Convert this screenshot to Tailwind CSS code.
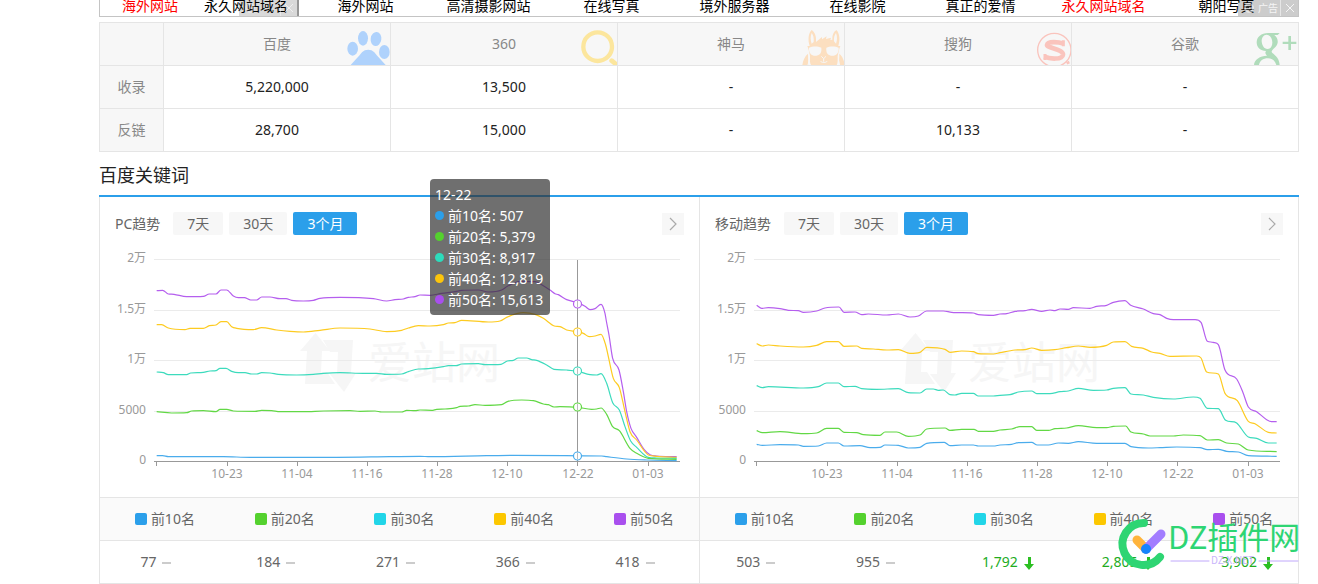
<!DOCTYPE html>
<html lang="zh-CN">
<head>
<meta charset="utf-8">
<title>百度关键词</title>
<script src="https://cdn.jsdelivr.net/npm/@tailwindcss/browser@4"></script>
</head>
<body class="bg-white text-sm text-[#666] font-['Noto_Sans','Noto_Sans_CJK_SC',sans-serif]">
<main class="relative ml-[99px] mr-[19px]">

  <!-- text link ads -->
  <nav class="relative flex h-[17px] border-x border-b border-[#c4c4c4] pl-[2px] pr-[10px] leading-[12px] text-center whitespace-nowrap text-black overflow-hidden">
    <a href="#" class="w-24 text-[#f00]">海外网站</a>
    <a href="#" class="w-24 mr-[10px]">永久网站域名</a>
    <a href="#" class="flex-1">海外网站</a>
    <a href="#" class="flex-1">高清摄影网站</a>
    <a href="#" class="flex-1">在线写真</a>
    <a href="#" class="flex-1">境外服务器</a>
    <a href="#" class="flex-1">在线影院</a>
    <a href="#" class="flex-1">真正的爱情</a>
    <a href="#" class="flex-1 text-[#f00]">永久网站域名</a>
    <a href="#" class="flex-1">朝阳写真</a>
    <div class="absolute left-[139px] bottom-0 flex h-4 w-[60px] items-center border-r-2 border-black/30 bg-black/15 text-white/60">
      <svg class="ml-[6px] size-[10px] shrink-0 opacity-50" viewBox="0 0 10 10" fill="none" stroke="currentColor" stroke-width="2"><circle cx="5" cy="5" r="4"/><path d="M5 5h3"/></svg>
      <button aria-label="关闭左侧广告" class="ml-auto flex h-full w-[17px] items-center justify-center border-l border-white/40"><svg class="size-2" viewBox="0 0 8 8" stroke="currentColor"><path d="M0 0l8 8M8 0l-8 8"/></svg></button>
    </div>
    <div class="absolute right-0 bottom-0 flex h-4 w-[60px] items-center bg-black/20 text-[10px] leading-4 text-white/80">
      <svg class="ml-[6px] size-[10px] shrink-0 opacity-60" viewBox="0 0 10 10" fill="none" stroke="currentColor" stroke-width="2"><circle cx="5" cy="5" r="4"/><path d="M5 5h3"/></svg>
      <span class="ml-[2px] w-[24px]">广告</span>
      <button aria-label="关闭广告" class="flex h-full flex-1 items-center justify-center border-l border-white/50"><svg class="size-2" viewBox="0 0 8 8" stroke="currentColor"><path d="M0 0l8 8M8 0l-8 8"/></svg></button>
    </div>
  </nav>

  <!-- search engine index table -->
  <table class="mt-[5px] w-full table-fixed border-collapse text-center text-[#222] [&_td]:h-[43px] [&_th]:h-[43px] [&_td]:border [&_th]:border [&_td]:border-[#e5e5e5] [&_th]:border-[#e5e5e5] [&_th]:bg-[#f7f7f7] [&_th]:font-normal [&_th]:text-[#888] [&_th]:relative [&_th]:p-0 [&_td]:p-0">
    <colgroup><col class="w-16"><col><col><col><col><col></colgroup>
    <thead>
      <tr>
        <th></th>
        <th scope="col">百度
          <svg class="absolute right-0 bottom-0 h-[35px] w-[43px]" viewBox="770 90 129 105" fill="#afd2fc"><ellipse cx="787" cy="146" rx="16" ry="21"/><ellipse cx="818" cy="115" rx="15" ry="22"/><ellipse cx="857" cy="117" rx="16" ry="21" transform="rotate(8 857 117)"/><ellipse cx="882" cy="156" rx="16" ry="21"/><path d="M781 195c12-14 24-24 34-38 10-10 27-10 37 0 10 14 22 24 34 38z"/></svg>
        </th>
        <th scope="col">360
          <svg class="absolute right-0 bottom-0 h-9 w-[37px]" viewBox="240 87 111 108" fill="none" stroke="#fce69d"><circle cx="293" cy="140" r="43" stroke-width="13"/><path d="M335 182l18 15" stroke-width="14" stroke-linecap="round"/></svg>
        </th>
        <th scope="col">神马
          <svg class="absolute right-0 bottom-0 h-9 w-[42px]" viewBox="905 87 126 108" fill="#fcdfc0"><path fill-rule="evenodd" d="M928 138c-6-20-4-38 6-48 11 7 14 21 13 36l18-15v7l14-9-2 8 15-4-2 7 6-1c-1-13 3-23 12-29 10 10 12 28 6 48h6l-3 8c-2 8-4 16-5 22 0 12 1 20-3 27h-77c-4-7-3-15-3-27-1-6-3-14-5-22l-3-8zM934 99c-4 10-4 22 0 32l6-5c1-11-1-21-6-27zM1007 99c-5 7-7 15-6 25l6 7c4-10 4-22 0-32z"/><path d="M906 195c2-15 8-27 17-34l1 34zM1033 195c-2-15-7-27-16-34l-1 34z"/><path fill="#f7f7f7" d="M926 143c10-5 27-5 37 0 2 18-7 24-18 24-12 0-20-8-19-24zM978 143c10-5 27-5 37 0 1 16-7 24-19 24-11 0-20-6-18-24z"/><path fill="none" stroke="#f7f7f7" stroke-width="3" d="M963 169l7 7 7-7M970 176v9M960 183c4 6 17 6 21 0M926 168q3 10-3 27M1015 168q-3 10 3 27"/></svg>
        </th>
        <th scope="col">搜狗
          <svg class="absolute right-0 bottom-0 h-[34px] w-[35px]" viewBox="408 93 105 102" fill="none" stroke="#fac4bd"><circle cx="463" cy="150" r="50" stroke-width="4"/><path stroke-width="14" d="M491 131c-14-5-48-9-50 4-1 9 49 12 48 29-2 16-40 13-56 6"/><path stroke-width="9" d="M490 121v18M435 162v18"/><path stroke-width="8" d="M500 190l8-4"/></svg>
        </th>
        <th scope="col">谷歌
          <svg class="absolute right-0 bottom-0 h-[34px] w-[46px]" viewBox="1057 93 138 102" fill="#b0dcbb"><path fill-rule="evenodd" d="M1105 99h35l-6 6h-10c8 7 11 14 10 23-2 14-19 20-18 28 4 7 23 14 24 39h-10c-4-14-13-20-25-20-15 0-25 8-27 20h-15c1-17 18-27 39-28-6-6-6-9-3-14-17 0-28-11-28-26 0-16 14-28 34-28zM1101 104c-10 0-15 9-15 20 1 13 8 23 17 23 10 0 15-8 15-20-1-13-7-23-17-23z"/><path d="M1149 125h41v7h-41zM1166 108h8v42h-8z"/></svg>
        </th>
      </tr>
    </thead>
    <tbody>
      <tr><th scope="row">收录</th><td>5,220,000</td><td>13,500</td><td>-</td><td>-</td><td>-</td></tr>
      <tr><th scope="row">反链</th><td>28,700</td><td>15,000</td><td>-</td><td>10,133</td><td>-</td></tr>
    </tbody>
  </table>

  <h2 class="flex h-[43px] items-center pt-[2px] text-lg text-[#222]">百度关键词</h2>

  <div class="relative grid grid-cols-2 border-t-2 border-[#2b9fea]">
    <!-- PC -->
    <section class="relative border-l border-[#e5e5e5]">
      <header class="flex items-center px-[15px] pt-[15px]">
        <h3 class="mr-[13px]">PC趋势</h3>
        <div class="flex gap-[6px] leading-[23px]">
          <button class="rounded-xs bg-[#f7f7f7] px-[14px]">7天</button>
          <button class="rounded-xs bg-[#f7f7f7] px-[14px]">30天</button>
          <button class="rounded-xs bg-[#2b9fea] px-[14px] text-white">3个月</button>
        </div>
        <button aria-label="PC趋势详情" class="ml-auto flex size-[22px] items-center justify-center bg-[#f7f7f7]"><svg class="h-[14px] w-2" viewBox="0 0 8 14" fill="none" stroke="#aaa" stroke-width="1.2"><path d="M1 1l6 6-6 6"/></svg></button>
      </header>
      <svg id="pc" class="block h-[262px] w-full text-xs" viewBox="100 235 590 262" preserveAspectRatio="xMinYMin meet" role="img" aria-label="PC趋势图"></svg>
      <table class="w-full table-fixed border-collapse text-center">
        <thead class="border-y border-[#e5e5e5] bg-[#fafafa]">
          <tr class="h-[43px] [&_th]:p-0 [&_th]:pl-[10px] [&_th]:font-normal">
            <th><span class="inline-flex items-center gap-1"><i class="size-3 rounded-xs bg-[#2b9fea]"></i>前10名</span></th>
            <th><span class="inline-flex items-center gap-1"><i class="size-3 rounded-xs bg-[#54d12e]"></i>前20名</span></th>
            <th><span class="inline-flex items-center gap-1"><i class="size-3 rounded-xs bg-[#21d5e8]"></i>前30名</span></th>
            <th><span class="inline-flex items-center gap-1"><i class="size-3 rounded-xs bg-[#fcc700]"></i>前40名</span></th>
            <th><span class="inline-flex items-center gap-1"><i class="size-3 rounded-xs bg-[#a94fee]"></i>前50名</span></th>
          </tr>
        </thead>
        <tbody class="border-b border-[#e5e5e5]">
          <tr class="h-[43px] [&_td]:p-0 [&_td]:pr-2 [&_i]:ml-[6px] [&_i]:inline-block [&_i]:h-[2px] [&_i]:w-[9px] [&_i]:bg-[#ccc] [&_i]:align-middle">
            <td>77<i></i></td><td>184<i></i></td><td>271<i></i></td><td>366<i></i></td><td>418<i></i></td>
          </tr>
        </tbody>
      </table>

      <!-- chart tooltip -->
      <div role="tooltip" class="absolute left-[330px] -top-[18px] w-[120px] rounded bg-[#323232]/70 p-[5px] leading-[21px] whitespace-nowrap text-white [&_p]:flex [&_p]:items-center [&_p]:gap-1 [&_i]:size-[9px] [&_i]:rounded-full">
        <div>12-22</div>
        <p><i class="bg-[#2b9fea]"></i>前10名: 507</p>
        <p><i class="bg-[#54d12e]"></i>前20名: 5,379</p>
        <p><i class="bg-[#2ddbbc]"></i>前30名: 8,917</p>
        <p><i class="bg-[#fcc50c]"></i>前40名: 12,819</p>
        <p><i class="bg-[#a94fee]"></i>前50名: 15,613</p>
      </div>
    </section>

    <!-- mobile -->
    <section class="border-x border-[#e5e5e5]">
      <header class="flex items-center px-[15px] pt-[15px]">
        <h3 class="mr-[13px]">移动趋势</h3>
        <div class="flex gap-[6px] leading-[23px]">
          <button class="rounded-xs bg-[#f7f7f7] px-[14px]">7天</button>
          <button class="rounded-xs bg-[#f7f7f7] px-[14px]">30天</button>
          <button class="rounded-xs bg-[#2b9fea] px-[14px] text-white">3个月</button>
        </div>
        <button aria-label="移动趋势详情" class="ml-auto flex size-[22px] items-center justify-center bg-[#f7f7f7]"><svg class="h-[14px] w-2" viewBox="0 0 8 14" fill="none" stroke="#aaa" stroke-width="1.2"><path d="M1 1l6 6-6 6"/></svg></button>
      </header>
      <svg id="mobile" class="block h-[262px] w-full text-xs" viewBox="100 235 590 262" preserveAspectRatio="xMinYMin meet" role="img" aria-label="移动趋势图"></svg>
      <table class="w-full table-fixed border-collapse text-center">
        <thead class="border-y border-[#e5e5e5] bg-[#fafafa]">
          <tr class="h-[43px] [&_th]:p-0 [&_th]:pl-[10px] [&_th]:font-normal">
            <th><span class="inline-flex items-center gap-1"><i class="size-3 rounded-xs bg-[#2b9fea]"></i>前10名</span></th>
            <th><span class="inline-flex items-center gap-1"><i class="size-3 rounded-xs bg-[#54d12e]"></i>前20名</span></th>
            <th><span class="inline-flex items-center gap-1"><i class="size-3 rounded-xs bg-[#21d5e8]"></i>前30名</span></th>
            <th><span class="inline-flex items-center gap-1"><i class="size-3 rounded-xs bg-[#fcc700]"></i>前40名</span></th>
            <th><span class="inline-flex items-center gap-1"><i class="size-3 rounded-xs bg-[#a94fee]"></i>前50名</span></th>
          </tr>
        </thead>
        <tbody class="border-b border-[#e5e5e5]">
          <tr class="h-[43px] [&_td]:p-0 [&_i]:ml-[6px] [&_i]:inline-block [&_i]:h-[2px] [&_i]:w-[9px] [&_i]:bg-[#ccc] [&_i]:align-middle [&_svg]:-mr-4 [&_svg]:ml-[6px] [&_svg]:inline-block [&_svg]:h-[13px] [&_svg]:w-[10px] [&_svg]:fill-[#2cbf22]">
            <td class="pr-2!">503<i></i></td><td class="pr-2!">955<i></i></td>
            <td class="pl-[2px]! text-[#22ac1e]">1,792<svg viewBox="0 0 10 13"><path d="M4 0h3v7h3l-5 6-5-6h4z"/></svg></td>
            <td class="pl-[2px]! text-[#22ac1e]">2,805<svg viewBox="0 0 10 13"><path d="M4 0h3v7h3l-5 6-5-6h4z"/></svg></td>
            <td class="pl-[2px]! text-[#22ac1e]">3,902<svg viewBox="0 0 10 13"><path d="M4 0h3v7h3l-5 6-5-6h4z"/></svg></td>
          </tr>
        </tbody>
      </table>
    </section>

    <!-- site watermark -->
    <svg class="pointer-events-none absolute right-0 bottom-[14px] h-[54px] w-[183px] overflow-visible font-['Noto_Sans_CJK_SC',sans-serif]" viewBox="0 0 183 54" fill="none" stroke-linecap="round" aria-label="DZ插件网">
      <path d="M28 7A21 21 0 1 0 44 41" stroke="#2ed573" stroke-width="8"/>
      <path d="M21 24l9 9" stroke="#ffb43c" stroke-width="9"/>
      <path d="M45 18L30 33" stroke="#a27dff" stroke-width="9"/>
      <circle cx="30" cy="33" r="5" fill="#1684fc"/>
      <text x="52" y="33" font-size="31" fill="#2ed573">DZ插件网</text>
      <path d="M55 45h38M143 45h39" stroke="#c0a8fb"/>
      <text x="95" y="48" font-size="10" fill="#c9b5fb">DZ-X.NET</text>
    </svg>
  </div>
</main>

<script>
// Each series is a list of [originX, originY, "x,y ..."] pieces, with x,y in thirds of a chart unit.
const charts = {
  pc: [
    ['#b55fee', [[90,160,'200,392 218,391 235,402 252,403 290,410 340,409 358,402 378,402 393,390 410,390 430,408 445,413 463,413 482,420 500,420 515,411 540,411 570,416 588,416 605,421 640,423 670,421 690,415 750,412 850,416 890,423 915,419 940,417 955,412 975,410 990,405'],
      [420,165,'30,391 65,385 105,380 125,376 175,375 205,381 245,375 262,364 285,353 300,349 345,350 370,362 390,375 405,386 415,389 440,404 473,413 495,424 510,434 525,431 543,418 555,445 559,468 567,510 578,580 597,615 610,680 620,740 633,790 650,817 672,853 690,869 710,873 770,875']]],
    ['#fdcb21', [[90,160,'200,494 215,494 235,504 285,509 300,505 340,505 358,497 378,495 393,485 410,485 425,500 440,505 490,509 515,503 560,510 600,514 640,516 690,511 750,504 840,507 890,515 935,511 955,504 985,497'],
      [420,165,'30,483 70,479 85,474 105,473 125,466 205,471 240,468 260,457 290,446 310,443 345,448 370,460 403,483 420,485 440,495 473,500 490,505 508,515 525,513 543,508 557,540 565,575 580,640 598,668 615,740 630,800 650,825 685,870 710,874 770,877']]],
    ['#3ddbbd', [[90,330,'200,126 220,128 235,134 290,134 302,129 340,127 360,123 378,122 390,115 408,115 425,124 445,128 465,128 485,132 500,132 515,128 540,129 565,133 620,135 670,133 700,130 750,128 820,130 860,130 890,133 935,132 955,125 985,117'],
      [420,320,'0,147 25,146 70,140 85,137 108,137 125,132 175,131 195,134 243,133 262,123 280,121 295,114 320,114 335,119 350,121 380,135 402,148 440,150 473,154 510,164 530,165 543,161 560,190 578,248 598,270 615,320 632,363 650,382 685,412 710,414 770,415']]],
    ['#62d845', [[90,330,'200,245 245,249 290,248 305,243 340,242 378,245 390,238 410,238 430,243 495,244 515,241 545,242 570,245 640,245 700,243 780,242 810,244 855,243 875,246 935,246 950,241 975,242'],
      [420,320,'0,270 35,271 50,268 75,267 110,263 120,259 145,258 165,254 195,256 245,254 262,245 305,240 340,242 370,252 385,254 402,261 420,260 473,262 515,268 530,267 543,264 560,283 578,320 598,332 630,385 650,400 685,415 770,418']]],
    ['#4aacec', [[90,330,'200,377 218,377 235,380 400,380 480,382 620,382 740,382 900,380'],
      [420,320,'0,409 30,410 200,407 280,406 545,408 560,410 620,417 680,420 770,422']]]
  ],
  mobile: [
    ['#b55fee', [[100,200,'170,316 185,325 205,323 240,326 265,331 295,332 310,337 350,333 375,324 417,321 432,337 465,336 485,344 505,342 560,345 595,342 630,351 655,348 680,333 730,333 755,337 820,339 835,344 880,346'],
      [400,200,'0,342 20,341 45,334 75,332 95,328 125,334 150,330 165,332 180,327 205,328 220,323 270,325 290,319 320,316 340,307 375,302 392,316 430,327 460,341 480,344 500,355 520,359 585,359 603,367 622,424 640,427 655,434 675,510 710,537 728,575 745,621 770,635 800,659 815,665 830,665']]],
    ['#fdcb21', [[100,200,'170,431 187,438 205,435 240,438 310,441 350,436 380,425 415,425 432,439 470,438 485,445 520,447 560,450 595,449 630,460 660,457 680,442 735,448 750,457 785,453 820,455 835,461 880,462'],
      [400,200,'0,458 45,450 75,449 95,444 125,451 165,449 200,443 235,438 270,442 320,436 340,426 375,425 395,439 430,445 455,456 480,460 510,469 590,468 603,474 620,516 655,522 675,580 712,602 745,664 765,671 805,697 830,699']]],
    ['#3ddbbd', [[100,200,'170,557 187,563 205,560 310,564 355,560 380,549 415,549 432,560 465,559 485,566 530,568 595,566 625,578 660,579 680,567 700,567 715,571 730,570 750,584 765,585 785,580 820,580 835,588 880,588'],
      [400,200,'0,586 30,584 55,576 95,573 110,581 150,581 180,575 205,573 235,565 280,571 320,570 340,565 375,563 393,582 430,585 460,592 520,597 580,591 600,595 622,625 655,626 677,661 710,669 745,711 770,715 805,729 830,729']]],
    ['#62d845', [[100,200,'170,692 187,698 240,695 310,701 350,699 380,685 415,685 432,697 470,698 490,704 540,706 555,696 590,696 625,709 660,705 680,687 735,684 750,691 785,688 822,688 835,694 880,694'],
      [400,200,'0,690 35,687 60,680 95,680 110,691 145,691 165,686 200,684 235,677 290,683 320,683 340,679 377,678 393,696 430,702 450,708 520,708 550,705 600,707 622,720 655,719 680,729 715,732 745,750 830,755']]],
    ['#4aacec', [[100,200,'170,733 187,736 240,734 295,735 310,739 355,738 380,729 415,729 432,738 480,737 510,743 540,742 555,735 595,736 625,744 660,742 680,730 733,727 750,737 785,735 820,735 835,738 880,738'],
      [400,200,'0,735 35,733 55,728 95,727 112,735 145,735 175,729 205,730 235,725 290,730 375,730 393,740 445,744 480,743 530,741 600,743 622,749 655,748 680,754 715,756 745,767 830,769']]]
  ]
};

// Monotone cubic curve through the points.
function curve(pieces) {
  const p = pieces.flatMap(([ox, oy, s]) => s.split(' ').map(q => {
    const [x, y] = q.split(',').map(Number);
    return [ox + x / 3, oy + y / 3];
  }));
  const n = p.length;
  const d = p.slice(1).map((q, i) => (q[1] - p[i][1]) / (q[0] - p[i][0]));
  const m = p.map((_, i) => {
    if (i === 0) return d[0];
    if (i === n - 1) return d[n - 2];
    const a = d[i - 1], b = d[i];
    if (a * b <= 0) return 0;
    return Math.sign(a) * Math.min(Math.abs(a + b) / 2, 3 * Math.abs(a), 3 * Math.abs(b));
  });
  let s = `M${p[0]}`;
  for (let i = 1; i < n; i++) {
    const h = (p[i][0] - p[i - 1][0]) / 3;
    s += `C${p[i - 1][0] + h},${p[i - 1][1] + h * m[i - 1]} ${p[i][0] - h},${p[i][1] - h * m[i]} ${p[i]}`;
  }
  return s;
}

for (const [id, series] of Object.entries(charts)) {
  const out = [];
  out.push('<g fill="#f6f6f6"><path d="M315.500 333l14.500 18h-8l-1 21h6l8 12h-30l2-33h-7zM323 340h30l-2 33h5l-12 19-14-18h7l1-22h-8z"/><text x="368" y="379" font-size="44">爱站网</text></g>');
  [['2万', 259], ['1.5万', 310], ['1万', 360], ['5000', 411], ['0', 461]].forEach(([label, y]) => {
    out.push(`<path d="M154 ${y + .5}H680" stroke="${label === '0' ? '#999' : '#ebebeb'}"/>`);
    out.push(`<text x="146" y="${y + 3}" text-anchor="end" fill="#999">${label}</text>`);
  });
  out.push('<path d="M156.500 461v5M227.500 461v5M297.500 461v5M367.500 461v5M437.500 461v5M507.500 461v5M577.500 461v5M648.500 461v5" stroke="#999"/>');
  ['10-23', '11-04', '11-16', '11-28', '12-10', '12-22', '01-03'].forEach((t, i) =>
    out.push(`<text x="${227 + Math.round(i * 70.1)}" y="478" text-anchor="middle" fill="#999">${t}</text>`));
  series.forEach(([c, pieces]) => out.push(`<path d="${curve(pieces)}" fill="none" stroke="${c}" stroke-width="1.2"/>`));
  if (id === 'pc') {
    out.push('<path d="M577.500 260V461" stroke="#999"/>');
    [304, 332, 371, 407, 456].forEach((y, i) =>
      out.push(`<circle cx="577.500" cy="${y}" r="4" fill="#fff" stroke="${series[i][0]}" stroke-width="1.2"/><path d="M577.500 ${y - 3}v6" stroke="#bbb"/>`));
  }
  document.getElementById(id).innerHTML = out.join('');
}
</script>
</body>
</html>
